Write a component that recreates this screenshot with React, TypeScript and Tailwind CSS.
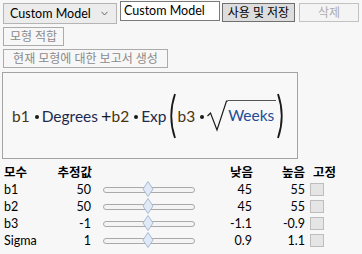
import React from 'react';

interface Param {
  name: string;
  est: string;
  low: string;
  high: string;
}

const params: Param[] = [
  { name: 'b1', est: '50', low: '45', high: '55' },
  { name: 'b2', est: '50', low: '45', high: '55' },
  { name: 'b3', est: '-1', low: '-1.1', high: '-0.9' },
  { name: 'Sigma', est: '1', low: '0.9', high: '1.1' },
];

function Paren({ right }: { right?: boolean }) {
  return (
    <svg width="9" height="48" viewBox="0 0 9 48" className="shrink-0">
      {right ? (
        <path d="M2 2 Q9.5 24 2 46" fill="none" stroke="#1a1a1a" strokeWidth="1.8" />
      ) : (
        <path d="M7 2 Q-0.5 24 7 46" fill="none" stroke="#1a1a1a" strokeWidth="1.8" />
      )}
    </svg>
  );
}

function Dot() {
  return <span className="inline-block w-[4px] h-[4px] rounded-full bg-[#1a1a1a] ml-[5px] mr-[3px] mt-[2px]" />;
}

function Slider() {
  return (
    <div className="relative w-[92px] h-[17px] flex items-center">
      <div className="w-full h-[6px] rounded-full border border-[#a9a9a9] bg-[#f4f4f4]" />
      {/* thumb */}
      <svg width="12" height="16" viewBox="0 0 12 16" className="absolute left-[39px] top-[0px]">
        <polygon points="6,0.5 11,8 6,15.5 1,8" fill="#e1e9f5" stroke="#a8bad6" strokeWidth="1" />
      </svg>
    </div>
  );
}

export default function App() {
  return (
    <div className="w-[362px] h-[254px] overflow-hidden bg-[#f7f7f7] text-[12.5px] leading-[16px] text-black font-['Lato','Noto_Sans_CJK_KR',sans-serif]">
      {/* top controls */}
      <div className="flex items-start pl-[3px] pt-[1px]">
        <div className="mt-[2px] w-[114px] h-[21px] flex items-center justify-between pl-[6px] pr-[8px] bg-[#ececec] border border-[#b4b4b4]">
          <span>Custom Model</span>
          <svg width="7" height="5" viewBox="0 0 7 5">
            <path d="M0.5 0.8 L3.5 4 L6.5 0.8" fill="none" stroke="#666" strokeWidth="1" />
          </svg>
        </div>
        <div className="ml-[3px] w-[100px] h-[20px] flex items-center pl-[3px] bg-white border border-[#7a7a7a]">
          Custom Model
        </div>
        <button className="ml-[2px] mt-[2px] w-[73px] h-[19px] flex items-center justify-center bg-[#dddddd] border border-[#707070] text-[12px]">
          사용 및 저장
        </button>
        <button className="ml-[4px] mt-[2px] w-[60px] h-[19px] flex items-center justify-center bg-[#f4f4f4] border border-[#c2c2c2] text-[#adadad] text-[12px]">
          삭제
        </button>
      </div>

      <div className="pl-[3px] mt-[3px]">
        <button className="w-[61px] h-[19px] flex items-center justify-center border border-[#ababab] text-[#8a8a8a] text-[12px]">
          모형 적합
        </button>
        <button className="mt-[3px] w-[165px] h-[19px] flex items-center justify-center border border-[#ababab] text-[#8a8a8a] text-[12px]">
          현재 모형에 대한 보고서 생성
        </button>
      </div>

      {/* formula */}
      <div className="mt-[4px] ml-[2px] w-[296px] h-[87px] border border-[#a3a3a3] bg-[#f8f8f8] flex items-center pl-[9px] text-[15.5px] leading-[20px] font-['Lato',sans-serif]">
        <span className="text-[#4a3410]">b1</span>
        <Dot />
        <span className="text-[#1d2a4f]">Degrees</span>
        <span className="text-[#1a1a1a] text-[18px] ml-[3px]">+</span>
        <span className="text-[#4a3410]">b2</span>
        <Dot />
        <span className="text-[#1d2a4f]">Exp</span>
        <span className="ml-[2px]" />
        <Paren />
        <span className="text-[#4a3410]">b3</span>
        <Dot />
        <div className="flex items-start">
          <svg width="21" height="32" viewBox="0 0 21 32" className="shrink-0">
            <path d="M0.5 16 L3.5 13 L10 30 L19.5 1 L21 1" fill="none" stroke="#1a1a1a" strokeWidth="1.2" />
          </svg>
          <span className="mt-[0.5px] pt-[4px] pr-[2px] border-t-[1.5px] border-[#555] text-[#1f4c96]">Weeks</span>
        </div>
        <Paren right />
      </div>

      {/* parameters */}
      <div className="mt-[5px] pl-[4px]">
        <div className="flex h-[17px] items-center font-bold">
          <span className="w-[51px]">모수</span>
          <span className="w-[37px] text-right">추정값</span>
          <span className="w-[161px] text-right">낮음</span>
          <span className="w-[52px] text-right">높음</span>
          <span className="pl-[8px]">고정</span>
        </div>
        {params.map(p => (
          <div key={p.name} className="flex h-[17px] items-center">
            <span className="w-[51px]">{p.name}</span>
            <span className="w-[36px] text-right">{p.est}</span>
            <span className="ml-[12px]">
              <Slider />
            </span>
            <span className="w-[57px] text-right">{p.low}</span>
            <span className="w-[53px] text-right">{p.high}</span>
            <span className="ml-[5px] w-[14px] h-[13px] bg-[#e5e5e5] border border-[#bdbdbd]" />
          </div>
        ))}
      </div>
    </div>
  );
}
